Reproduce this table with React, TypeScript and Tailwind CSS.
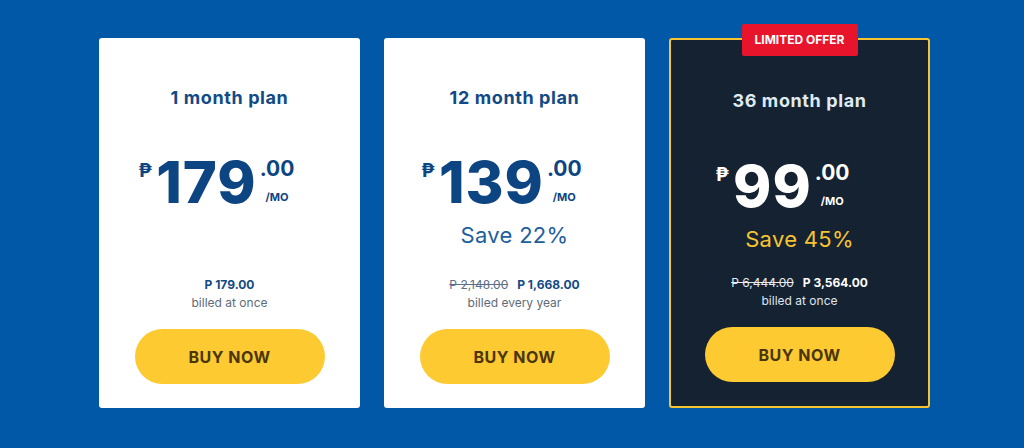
import React from 'react';

type Plan = {
  title: string;
  price: string;
  save?: string;
  oldTotal?: string;
  total: string;
  billed: string;
  featured?: boolean;
};

const plans: Plan[] = [
  { title: '1 month plan', price: '179', total: 'P 179.00', billed: 'billed at once' },
  {
    title: '12 month plan',
    price: '139',
    save: 'Save 22%',
    oldTotal: 'P 2,148.00',
    total: 'P 1,668.00',
    billed: 'billed every year',
  },
  {
    title: '36 month plan',
    price: '99',
    save: 'Save 45%',
    oldTotal: 'P 6,444.00',
    total: 'P 3,564.00',
    billed: 'billed at once',
    featured: true,
  },
];

function PlanCard({ plan }: { plan: Plan }) {
  const dark = plan.featured;
  return (
    <div
      className={
        dark
          ? 'relative flex h-[370px] w-[261px] flex-col items-center rounded-[3px] border-2 border-[#f6c431] bg-[#152232] px-[33px] pb-[24px] pt-[1px]'
          : 'relative flex h-[370px] w-[261px] flex-col items-center rounded-[3px] bg-white px-[35px] pb-[24px]'
      }
    >
      {dark && (
        <div className="absolute left-1/2 top-[-16px] flex h-[32px] w-[116px] -translate-x-1/2 items-center justify-center rounded-[2px] bg-[#e8142c] text-[12px] font-bold text-white">
          LIMITED OFFER
        </div>
      )}

      {/* Title */}
      <div
        className={
          dark
            ? 'mt-[50px] text-[18px] font-bold leading-[20px] tracking-[0.6px] text-[#dfeaf3]'
            : 'mt-[50px] text-[18px] font-bold leading-[20px] tracking-[0.6px] text-[#124a86]'
        }
      >
        {plan.title}
      </div>

      {/* Price */}
      <div
        className={
          dark
            ? 'mt-[52px] flex items-start pr-[34px] text-white'
            : 'mt-[51px] flex items-start pr-[26px] text-[#0d4482]'
        }
      >
        <span className="mt-[2px] text-[19px] font-bold leading-none">₱</span>
        <span className="ml-[4px] text-[58px] font-extrabold leading-[46px] tracking-[1px]">{plan.price}</span>
        <div className="ml-[3px] flex flex-col items-center">
          <span className="mt-[1px] text-[21px] font-bold leading-[18px]">.00</span>
          <span className="mt-[14px] text-[11px] font-bold leading-none">/MO</span>
        </div>
      </div>

      {/* Save */}
      <div
        className={
          dark
            ? 'mt-[16px] h-[28px] text-[22px] leading-[28px] tracking-[0.3px] text-[#f6c431]'
            : 'mt-[16px] h-[28px] text-[22px] leading-[28px] tracking-[0.3px] text-[#1d5e9e]'
        }
      >
        {plan.save}
      </div>

      <div className="flex-1" />

      {/* Totals */}
      <div
        className={
          dark
            ? 'flex items-center gap-[9px] text-[12px] leading-[18px] text-white'
            : 'flex items-center gap-[9px] text-[12px] leading-[18px] text-[#124a86]'
        }
      >
        {plan.oldTotal && (
          <span className={dark ? 'text-[#e6ebf1] line-through' : 'text-[#5d6f86] line-through'}>{plan.oldTotal}</span>
        )}
        <span className="font-bold">{plan.total}</span>
      </div>
      <div className={dark ? 'text-[12px] leading-[18px] text-[#dfe6ee]' : 'text-[12px] leading-[18px] text-[#5d6b7b]'}>
        {plan.billed}
      </div>

      <button className="mt-[17px] flex h-[55px] w-[190px] items-center justify-center rounded-full bg-[#fdca31] text-[16px] font-bold tracking-[0.5px] text-[#4a3508]">
        BUY NOW
      </button>
    </div>
  );
}

export default function App() {
  return (
    <div
      className="flex h-[448px] w-full items-start justify-center gap-[24px] bg-[#0058a6] pl-[5px] pt-[38px]"
      style={{ fontFamily: 'Inter, "Noto Sans", sans-serif' }}
    >
      {plans.map((p) => (
        <PlanCard key={p.title} plan={p} />
      ))}
    </div>
  );
}
